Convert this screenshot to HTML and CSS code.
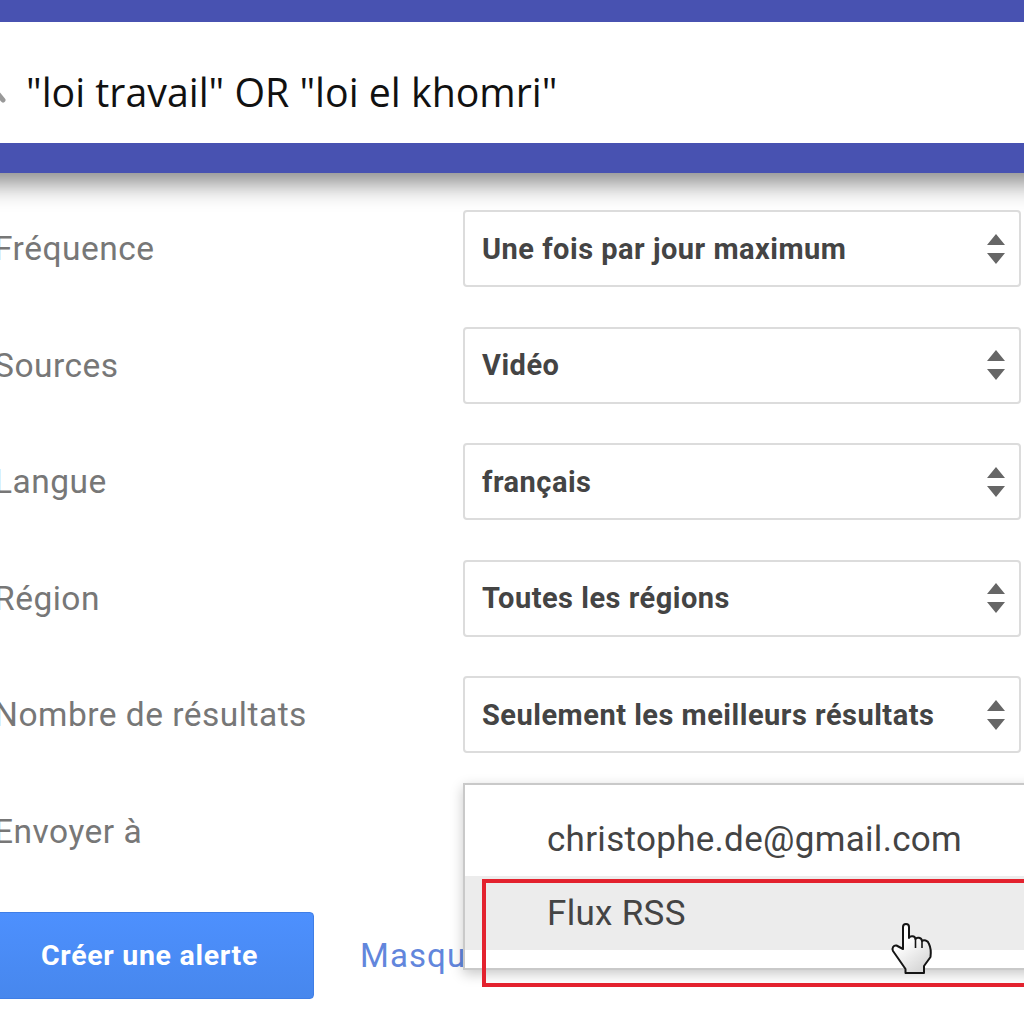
FILE: index.html
```html
<!DOCTYPE html>
<html lang="fr">
<head>
<meta charset="utf-8">
<title>Alerte</title>
<link rel="stylesheet" href="styles.css">
</head>
<body>
<header class="bar">
  <div class="query">
    <svg class="search" width="8" height="14" viewBox="0 0 8 14"><path d="M-2 4 L3 10" stroke="#999" stroke-width="5" stroke-linecap="round"/></svg>
    <span>"loi travail" OR "loi el khomri"</span>
  </div>
</header>
<main class="form">
  <div class="row"><span class="label">Fréquence</span><div class="select"><span>Une fois par jour maximum</span><svg class="arrows" width="18" height="30" viewBox="0 0 18 30"><path d="M9 0 L18 11 H0Z M0 19 H18 L9 30Z" fill="#666"/></svg></div></div>
  <div class="row"><span class="label">Sources</span><div class="select"><span>Vidéo</span><svg class="arrows" width="18" height="30" viewBox="0 0 18 30"><path d="M9 0 L18 11 H0Z M0 19 H18 L9 30Z" fill="#666"/></svg></div></div>
  <div class="row"><span class="label">Langue</span><div class="select"><span>français</span><svg class="arrows" width="18" height="30" viewBox="0 0 18 30"><path d="M9 0 L18 11 H0Z M0 19 H18 L9 30Z" fill="#666"/></svg></div></div>
  <div class="row"><span class="label">Région</span><div class="select"><span>Toutes les régions</span><svg class="arrows" width="18" height="30" viewBox="0 0 18 30"><path d="M9 0 L18 11 H0Z M0 19 H18 L9 30Z" fill="#666"/></svg></div></div>
  <div class="row"><span class="label">Nombre de résultats</span><div class="select"><span>Seulement les meilleurs résultats</span><svg class="arrows" width="18" height="30" viewBox="0 0 18 30"><path d="M9 0 L18 11 H0Z M0 19 H18 L9 30Z" fill="#666"/></svg></div></div>
  <div class="row"><span class="label">Envoyer à</span></div>
  <div class="actions">
    <button class="create">Créer une alerte</button>
    <a class="hide">Masquer</a>
  </div>
</main>
<div class="menu">
  <div class="option">christophe.de@gmail.com</div>
  <div class="option hover">Flux RSS</div>
</div>
<div class="redbox"></div>
<svg class="hand" width="44" height="54" viewBox="0 0 44 54">
  <defs><linearGradient id="g" x1="0" y1="0" x2="0.6" y2="1"><stop offset="0.4" stop-color="#fff"/><stop offset="1" stop-color="#d8d8d8"/></linearGradient></defs>
  <path d="M13 27 V5 C13 1 19 1 19 5 V16 C20 13.5 25 13.5 25.5 17 C26.500 15 31.500 15 32 19 C33.500 17.500 38 18 39 22 C40.500 25 41 31 40.500 35 L34 44 V51 H15.500 V47 L3 29 C1.500 26 3.500 23 6.500 23.500 Z" fill="url(#g)" stroke="#151515" stroke-width="2" stroke-linejoin="round"/>
  <path d="M25.500 17 V26 M32 19 V26" stroke="#151515" stroke-width="1.600" fill="none"/>
</svg>
</body>
</html>
```
FILE: styles.css
```css
* { box-sizing: border-box; }
html, body { margin: 0; padding: 0; }
body {
  width: 1024px;
  height: 1024px;
  overflow: hidden;
  position: relative;
  background: #fff;
  font-family: Roboto, "Liberation Sans", sans-serif;
}
.bar {
  background: #4852b1;
  margin: 0 -40px;
  padding: 22px 40px 30px;
  box-shadow: 0 10px 24px rgba(0, 0, 0, 0.48);
}
.query {
  background: #fff;
  height: 121px;
  padding-top: 18px;
  display: flex;
  align-items: center;
  gap: 18px;
  font-family: "Open Sans", "DejaVu Sans", sans-serif;
  font-size: 39.3px;
  color: #111;
}
.search { flex: none; margin-top: 10px; }
.form {
  margin-left: -6px;
  padding-top: 37px;
  display: flex;
  flex-direction: column;
}
.row {
  display: flex;
  align-items: center;
  height: 77px;
  margin-bottom: 39.500px;
}
.label {
  width: 469px;
  flex: none;
  font-size: 33.5px;
  letter-spacing: 0.5px;
  color: #777;
}
.select {
  width: 558px;
  height: 77px;
  flex: none;
  border: 2px solid #dcdcdc;
  border-radius: 4px;
  padding: 0 14px 0 17px;
  display: flex;
  align-items: center;
  justify-content: space-between;
  font-size: 29px;
  font-weight: 700;
  letter-spacing: 0.5px;
  color: #444;
}
.actions {
  display: flex;
  align-items: center;
  gap: 46px;
  margin-top: 3px;
}
.create {
  width: 320px;
  height: 87px;
  border: 1px solid #3f7ee6;
  border-radius: 4px;
  background: linear-gradient(#4d90fe, #4787ed);
  color: #fff;
  font: 700 28.5px Roboto, sans-serif;
  letter-spacing: 0.7px;
  padding: 0 9px 0 0;
}
.hide {
  font-size: 33px;
  color: #6286dc;
  letter-spacing: 1.1px;
  white-space: nowrap;
}
.menu {
  position: absolute;
  left: 463px;
  top: 783px;
  width: 600px;
  height: 187px;
  background: #fff;
  border: 2px solid #c9c9c9;
  box-shadow: 0 4px 12px rgba(0, 0, 0, 0.22);
  padding-top: 17px;
}
.option {
  height: 74px;
  padding-left: 82px;
  display: flex;
  align-items: center;
  font-size: 35px;
  letter-spacing: 0.3px;
  color: #444;
}
.hover { background: #ececec; }
.redbox {
  position: absolute;
  left: 482px;
  top: 879px;
  width: 600px;
  height: 108px;
  border: 4px solid #e3222e;
}
.hand {
  position: absolute;
  left: 890px;
  top: 922px;
}
```
